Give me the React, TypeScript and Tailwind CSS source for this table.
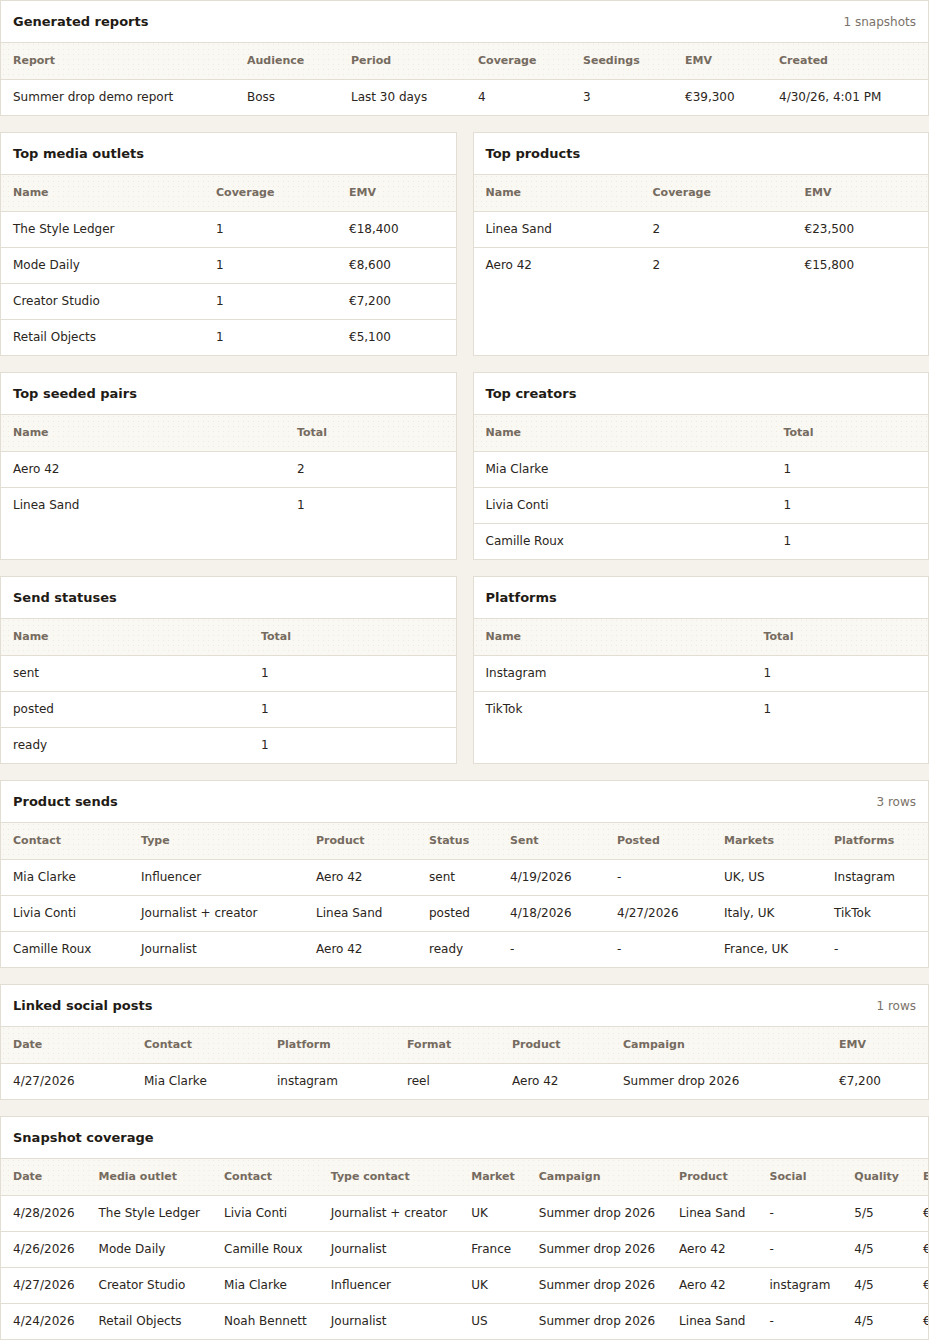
import React from "react";

type Col = { label: string; w?: string };

const Head = ({ cols, auto }: { cols: Col[]; auto?: boolean }) => (
  <thead>
    <tr className="bg-[#faf8f2] bg-[radial-gradient(#efeadf_0.6px,transparent_0.7px)] bg-[length:5px_5px]">
      {cols.map((c, i) => (
        <th
          key={i}
          className={`h-[37px] border-t border-[#e3ded3] p-0 px-3 text-left align-middle text-[11px] font-bold text-[#756b60] ${auto ? "whitespace-nowrap" : ""}`}
        >
          {c.label}
        </th>
      ))}
    </tr>
  </thead>
);

const Body = ({ rows, auto }: { rows: string[][]; auto?: boolean }) => (
  <tbody>
    {rows.map((r, i) => (
      <tr key={i}>
        {r.map((v, j) => (
          <td
            key={j}
            className={`h-[36px] border-t border-[#e3ded3] p-0 px-3 pb-[2px] align-middle text-[12px] text-[#2a2520] ${auto ? "whitespace-nowrap" : ""}`}
          >
            {v}
          </td>
        ))}
      </tr>
    ))}
  </tbody>
);

function Card({
  title,
  meta,
  cols,
  rows,
  auto,
}: {
  title: string;
  meta?: string;
  cols: Col[];
  rows: string[][];
  auto?: boolean;
}) {
  return (
    <div className="border border-[#e3ded3] bg-white overflow-x-auto">
      <div className="flex h-[41px] items-center justify-between px-3">
        <div className="text-[13px] font-bold text-[#1f1b16]">{title}</div>
        {meta && <div className="text-[12px] text-[#7a7268]">{meta}</div>}
      </div>
      <table className={`${auto ? "table-auto" : "table-fixed w-full"} border-separate border-spacing-0`}>
        {!auto && (
          <colgroup>
            {cols.map((c, i) => (
              <col key={i} className={c.w} />
            ))}
          </colgroup>
        )}
        <Head cols={cols} auto={auto} />
        <Body rows={rows} auto={auto} />
      </table>
    </div>
  );
}

export default function App() {
  return (
    <div
      className="min-h-screen bg-[#f5f2eb] flex flex-col gap-4"
      style={{ fontFamily: '"DejaVu Sans", "Liberation Sans", sans-serif' }}
    >
      <Card
        title="Generated reports"
        meta="1 snapshots"
        cols={[
          { label: "Report", w: "w-[234px]" },
          { label: "Audience", w: "w-[104px]" },
          { label: "Period", w: "w-[127px]" },
          { label: "Coverage", w: "w-[105px]" },
          { label: "Seedings", w: "w-[102px]" },
          { label: "EMV", w: "w-[94px]" },
          { label: "Created" },
        ]}
        rows={[["Summer drop demo report", "Boss", "Last 30 days", "4", "3", "€39,300", "4/30/26, 4:01 PM"]]}
      />

      <div className="grid grid-cols-2 gap-4">
        <Card
          title="Top media outlets"
          cols={[
            { label: "Name", w: "w-[203px]" },
            { label: "Coverage", w: "w-[133px]" },
            { label: "EMV" },
          ]}
          rows={[
            ["The Style Ledger", "1", "€18,400"],
            ["Mode Daily", "1", "€8,600"],
            ["Creator Studio", "1", "€7,200"],
            ["Retail Objects", "1", "€5,100"],
          ]}
        />
        <Card
          title="Top products"
          cols={[
            { label: "Name", w: "w-[167px]" },
            { label: "Coverage", w: "w-[152px]" },
            { label: "EMV" },
          ]}
          rows={[
            ["Linea Sand", "2", "€23,500"],
            ["Aero 42", "2", "€15,800"],
          ]}
        />
      </div>

      <div className="grid grid-cols-2 gap-4">
        <Card
          title="Top seeded pairs"
          cols={[{ label: "Name", w: "w-[284px]" }, { label: "Total" }]}
          rows={[
            ["Aero 42", "2"],
            ["Linea Sand", "1"],
          ]}
        />
        <Card
          title="Top creators"
          cols={[{ label: "Name", w: "w-[298px]" }, { label: "Total" }]}
          rows={[
            ["Mia Clarke", "1"],
            ["Livia Conti", "1"],
            ["Camille Roux", "1"],
          ]}
        />
      </div>

      <div className="grid grid-cols-2 gap-4">
        <Card
          title="Send statuses"
          cols={[{ label: "Name", w: "w-[248px]" }, { label: "Total" }]}
          rows={[
            ["sent", "1"],
            ["posted", "1"],
            ["ready", "1"],
          ]}
        />
        <Card
          title="Platforms"
          cols={[{ label: "Name", w: "w-[278px]" }, { label: "Total" }]}
          rows={[
            ["Instagram", "1"],
            ["TikTok", "1"],
          ]}
        />
      </div>

      <Card
        title="Product sends"
        meta="3 rows"
        cols={[
          { label: "Contact", w: "w-[128px]" },
          { label: "Type", w: "w-[175px]" },
          { label: "Product", w: "w-[113px]" },
          { label: "Status", w: "w-[81px]" },
          { label: "Sent", w: "w-[107px]" },
          { label: "Posted", w: "w-[107px]" },
          { label: "Markets", w: "w-[110px]" },
          { label: "Platforms" },
        ]}
        rows={[
          ["Mia Clarke", "Influencer", "Aero 42", "sent", "4/19/2026", "-", "UK, US", "Instagram"],
          ["Livia Conti", "Journalist + creator", "Linea Sand", "posted", "4/18/2026", "4/27/2026", "Italy, UK", "TikTok"],
          ["Camille Roux", "Journalist", "Aero 42", "ready", "-", "-", "France, UK", "-"],
        ]}
      />

      <Card
        title="Linked social posts"
        meta="1 rows"
        cols={[
          { label: "Date", w: "w-[131px]" },
          { label: "Contact", w: "w-[133px]" },
          { label: "Platform", w: "w-[130px]" },
          { label: "Format", w: "w-[105px]" },
          { label: "Product", w: "w-[111px]" },
          { label: "Campaign", w: "w-[216px]" },
          { label: "EMV" },
        ]}
        rows={[["4/27/2026", "Mia Clarke", "instagram", "reel", "Aero 42", "Summer drop 2026", "€7,200"]]}
      />

      <Card
        title="Snapshot coverage"
        auto
        cols={[
          { label: "Date" },
          { label: "Media outlet" },
          { label: "Contact" },
          { label: "Type contact" },
          { label: "Market" },
          { label: "Campaign" },
          { label: "Product" },
          { label: "Social" },
          { label: "Quality" },
          { label: "EMV" },
        ]}
        rows={[
          ["4/28/2026", "The Style Ledger", "Livia Conti", "Journalist + creator", "UK", "Summer drop 2026", "Linea Sand", "-", "5/5", "€18,400"],
          ["4/26/2026", "Mode Daily", "Camille Roux", "Journalist", "France", "Summer drop 2026", "Aero 42", "-", "4/5", "€8,600"],
          ["4/27/2026", "Creator Studio", "Mia Clarke", "Influencer", "UK", "Summer drop 2026", "Aero 42", "instagram", "4/5", "€7,200"],
          ["4/24/2026", "Retail Objects", "Noah Bennett", "Journalist", "US", "Summer drop 2026", "Linea Sand", "-", "4/5", "€5,100"],
        ]}
      />
    </div>
  );
}
